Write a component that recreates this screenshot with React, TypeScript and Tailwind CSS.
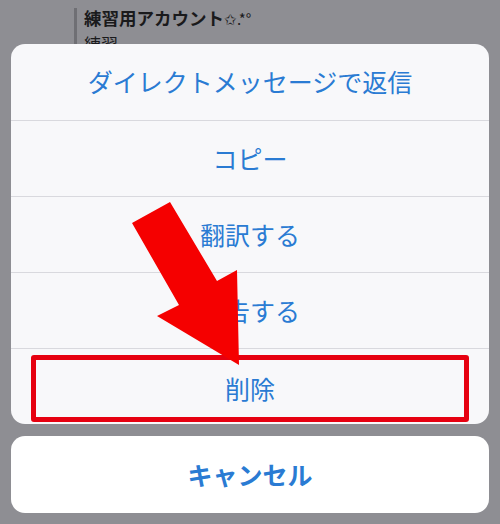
import React from "react";

const rows = ["ダイレクトメッセージで返信", "コピー", "翻訳する", "報告する"];

export default function App() {
  return (
    <div
      className="relative w-[500px] h-[524px] overflow-hidden bg-[#8e8e93] flex flex-col"
      style={{ fontFamily: '"Noto Sans CJK JP", "Noto Sans", sans-serif' }}
    >
      {/* underlying page content */}
      <div className="h-[44px] overflow-hidden pl-[74px] pt-[8px]">
        <div className="border-l-[3px] border-[#6f6f74] pl-[7px] h-[60px]">
          <div className="text-[17.5px] leading-[20px] font-bold text-[#1a1a1c] flex items-baseline">
            練習用アカウント<span className="text-[15px] font-normal">✩.*°</span>
          </div>
          <div className="text-[17px] leading-[20px] text-[#1a1a1c] mt-[5px]">練習</div>
        </div>
      </div>

      {/* action sheet */}
      <div className="mx-[11px] rounded-[14px] bg-[#f8f8fa] overflow-hidden flex flex-col">
        {rows.map((r, i) => (
          <div
            key={r}
            className={
              "h-[76px] flex items-center justify-center text-[25px] text-[#2a7bd3] " +
              (i > 0 ? "border-t border-[#d9d9de]" : "")
            }
          >
            {r}
          </div>
        ))}
        <div className="h-[76px] border-t border-[#d9d9de] px-[20px] pt-[6px] pb-[2px] flex">
          <div className="flex-1 border-[5px] border-[#e60010] rounded-[3px] flex items-center justify-center text-[25px] text-[#2a7bd3]">
            削除
          </div>
        </div>
      </div>

      {/* cancel */}
      <div className="mx-[11px] mt-[12px] h-[77px] rounded-[14px] bg-white flex items-center justify-center text-[25px] font-bold text-[#2a7bd3]">
        キャンセル
      </div>

      {/* red arrow annotation */}
      <svg
        className="absolute left-0 top-0 pointer-events-none"
        width="500"
        height="524"
        viewBox="0 0 500 524"
      >
        <polygon
          points="132,223 170,202 217,281 237,270 239,365 157,316 179,305"
          fill="#f50000"
        />
      </svg>
    </div>
  );
}
